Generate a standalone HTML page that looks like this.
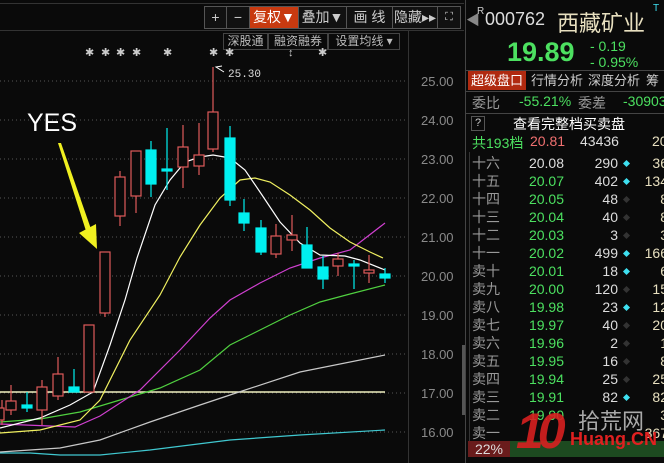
<!DOCTYPE html>
<html><head><meta charset="utf-8"><style>
*{margin:0;padding:0}
html,body{width:664px;height:463px;overflow:hidden}
body{background:#0a0a0a;position:relative;font-family:"Liberation Sans","Noto Sans CJK SC",sans-serif}
.a{position:absolute;white-space:nowrap}
.btn{position:absolute;top:6px;height:21px;border:1px solid #555;color:#ccc;font-size:14px;line-height:21px;text-align:center;background:#111}
.b2{position:absolute;top:33px;height:15px;border:1px solid #444;color:#bbb;font-size:12px;line-height:15px;text-align:center}
.row{position:absolute;left:466px;width:198px;height:18px;font-size:14px;line-height:18px}
.row .l{position:absolute;left:6px;color:#999}
.row .p{position:absolute;right:100px;color:#4ce060;font-family:"Liberation Sans",sans-serif}
.row .v{position:absolute;right:46px;color:#ddd;font-family:"Liberation Sans",sans-serif}
.row .d{position:absolute;left:158px;top:7px;width:5px;height:5px;transform:rotate(45deg);background:#333}
.row .d.c{background:#3ee0f0}
.row .r{position:absolute;right:-4px;color:#e8e0c0;font-family:"Liberation Sans",sans-serif}
</style></head><body>
<div class="a" style="left:0;top:3px;width:464px;height:1px;background:#333"></div>
<div class="a" style="left:0;top:30px;width:464px;height:1px;background:#333"></div>
<div class="btn" style="left:204px;width:21px">+</div>
<div class="btn" style="left:226px;width:22px">−</div>
<div class="btn" style="left:249px;width:48px;background:#c83a10;color:#fff">复权▼</div>
<div class="btn" style="left:298px;width:47px">叠加▼</div>
<div class="btn" style="left:346px;width:45px">画 线</div>
<div class="btn" style="left:392px;width:44px">隐藏▸▸</div>
<div class="btn" style="left:437px;width:22px;font-size:11px">⛶</div>
<div class="b2" style="left:223px;width:43px">深股通</div>
<div class="b2" style="left:268px;width:58px">融资融券</div>
<div class="b2" style="left:328px;width:70px">设置均线 ▾</div>

<svg class="a" style="left:0;top:0" width="466" height="463">
<g stroke="#555" stroke-dasharray="1,3">
<line x1="0" y1="81" x2="408" y2="81"/><line x1="0" y1="120" x2="408" y2="120"/><line x1="0" y1="159" x2="408" y2="159"/><line x1="0" y1="198" x2="408" y2="198"/><line x1="0" y1="237" x2="408" y2="237"/><line x1="0" y1="276" x2="408" y2="276"/><line x1="0" y1="315" x2="408" y2="315"/><line x1="0" y1="354" x2="408" y2="354"/><line x1="0" y1="393" x2="408" y2="393"/><line x1="0" y1="432" x2="408" y2="432"/>
</g>
<line x1="408.5" y1="31" x2="408.5" y2="463" stroke="#333"/>
<rect x="462" y="345" width="3" height="70" fill="#555"/>
<g fill="#8a8a8a" font-size="13" font-family="Liberation Sans">
<text x="421" y="86">25.00</text><text x="421" y="125">24.00</text><text x="421" y="164">23.00</text><text x="421" y="203">22.00</text><text x="421" y="242">21.00</text><text x="421" y="281">20.00</text><text x="421" y="320">19.00</text><text x="421" y="359">18.00</text><text x="421" y="398">17.00</text><text x="421" y="437">16.00</text>
</g>
<g fill="#ccc" font-size="11"><text x="85" y="56">✱</text><text x="101" y="56">✱</text><text x="116" y="56">✱</text><text x="132" y="56">✱</text><text x="163" y="56">✱</text><text x="209" y="56">✱</text><text x="225" y="56">✱</text><text x="288" y="56">↕</text><text x="318" y="56">✱</text></g>
<line x1="0" y1="392" x2="385" y2="392" stroke="#f0f0c0" stroke-width="1.5"/>
<g fill="none" stroke-width="1.2">
<polyline stroke="#40c8d0" points="0,453 30,453 60,455 100,455 150,450 230,440 300,435 385,430"/>
<polyline stroke="#c8c8c8" points="0,452 60,448 100,440 150,422 200,405 230,395 300,372 385,355"/>
<polyline stroke="#50d040" points="0,422 40,419 80,412 120,400 160,388 200,370 230,345 260,330 290,315 320,302 350,294 385,285"/>
<polyline stroke="#d040d0" points="0,424 75,427 100,416 140,390 180,350 210,318 230,300 260,283 290,268 320,258 350,250 385,223"/>
<polyline stroke="#f0f060" points="0,433 40,430 80,420 100,400 130,340 160,295 180,257 200,225 220,198 240,180 255,178 270,182 290,195 310,210 330,228 350,242 370,252 383,258"/>
<polyline stroke="#ffffff" points="0,428 40,418 70,405 93,392 110,345 125,300 137,258 155,205 170,180 185,162 200,157 213,155 230,158 245,170 262,195 280,222 300,243 320,255 345,256 360,260 385,270"/>
</g>
<g stroke="#e05a5a" fill="#0a0a0a" stroke-width="1.2">
<line x1="2" y1="400" x2="2" y2="425"/><rect x="-5" y="408" width="9" height="12"/>
<line x1="11" y1="385" x2="11" y2="415"/><rect x="6" y="401" width="10" height="9"/>
<line x1="42" y1="380" x2="42" y2="425"/><rect x="37" y="387" width="10" height="23"/>
<line x1="58" y1="357" x2="58" y2="400"/><rect x="53" y="374" width="10" height="22"/>
<rect x="84" y="325" width="10" height="67"/>
<line x1="105" y1="313" x2="105" y2="317"/><rect x="100" y="252" width="10" height="61"/>
<line x1="120" y1="171" x2="120" y2="226"/><rect x="115" y="177" width="10" height="39"/>
<line x1="136" y1="151" x2="136" y2="213"/><rect x="131" y="151" width="10" height="45"/>
<line x1="183" y1="125" x2="183" y2="188"/><rect x="178" y="147" width="10" height="20"/>
<line x1="199" y1="123" x2="199" y2="175"/><rect x="194" y="155" width="10" height="11"/>
<line x1="213" y1="67" x2="213" y2="152"/><rect x="208" y="112" width="10" height="37"/>
<line x1="276" y1="224" x2="276" y2="258"/><rect x="271" y="236" width="10" height="18"/>
<line x1="292" y1="215" x2="292" y2="251"/><rect x="287" y="235" width="10" height="5"/>
<line x1="338" y1="253" x2="338" y2="276"/><rect x="333" y="259" width="10" height="7"/>
<line x1="369" y1="255" x2="369" y2="283"/><rect x="364" y="270" width="10" height="3"/>
</g>
<g stroke="#00f0f0" fill="#00f0f0" stroke-width="1.2">
<line x1="27" y1="392" x2="27" y2="412"/><rect x="22" y="405" width="10" height="3"/>
<line x1="74" y1="369" x2="74" y2="392"/><rect x="69" y="387" width="10" height="5"/>
<line x1="151" y1="141" x2="151" y2="197"/><rect x="146" y="150" width="10" height="34"/>
<line x1="167" y1="128" x2="167" y2="190"/><rect x="162" y="169" width="10" height="2"/>
<line x1="230" y1="126" x2="230" y2="206"/><rect x="225" y="138" width="10" height="62"/>
<line x1="244" y1="199" x2="244" y2="231"/><rect x="239" y="213" width="10" height="10"/>
<line x1="261" y1="220" x2="261" y2="255"/><rect x="256" y="228" width="10" height="24"/>
<line x1="307" y1="227" x2="307" y2="268"/><rect x="302" y="245" width="10" height="23"/>
<line x1="323" y1="256" x2="323" y2="289"/><rect x="318" y="267" width="10" height="12"/>
<line x1="354" y1="260" x2="354" y2="289"/><rect x="349" y="264" width="10" height="2"/>
<line x1="385" y1="268" x2="385" y2="283"/><rect x="380" y="274" width="10" height="4"/>
</g>
<polyline points="224,72 216,67 222,66" fill="none" stroke="#fff"/>
<text x="228" y="77" fill="#ddd" font-size="11" font-family="Liberation Mono">25.30</text>
<text x="27" y="131" fill="#fff" font-size="25" font-family="Liberation Sans">YES</text>
<polygon points="58,143 61,143 91,229 86,231" fill="#f0f020"/>
<polygon points="79,233 96,224 97,249" fill="#f0f020"/>
</svg>

<div class="a" style="left:465px;top:0;width:1px;height:463px;background:#444"></div>
<div class="a" style="left:466px;top:10px;color:#888;font-size:14px">◀</div>
<div class="a" style="left:477px;top:6px;color:#ccc;font-size:10px">R</div>
<div class="a" style="left:485px;top:9px;color:#ddd;font-size:18px;font-family:'Liberation Sans'">000762</div>
<div class="a" style="left:557px;top:6px;color:#e8e0c0;font-size:22px">西藏矿业</div>
<div class="a" style="left:653px;top:3px;color:#3ee0f0;font-size:10px">T</div>
<div class="a" style="left:507px;top:37px;color:#4ce060;font-size:27px;font-weight:bold">19.89</div>
<div class="a" style="left:590px;top:38px;color:#4ce060;font-size:14px;line-height:16px">- 0.19<br>- 0.95%</div>
<div class="a" style="left:466px;top:70px;width:198px;height:20px;border-top:1px solid #444;border-bottom:1px solid #444"></div>
<div class="a" style="left:468px;top:71px;width:58px;height:19px;background:#b02a10;color:#fff;font-size:13px;line-height:19px;text-align:center">超级盘口</div>
<div class="a" style="left:531px;top:71px;color:#ccc;font-size:13px;line-height:19px">行情分析</div>
<div class="a" style="left:588px;top:71px;color:#ccc;font-size:13px;line-height:19px">深度分析</div>
<div class="a" style="left:646px;top:71px;color:#ccc;font-size:13px;line-height:19px">筹</div>
<div class="a" style="left:472px;top:93px;color:#999;font-size:14px">委比</div>
<div class="a" style="left:519px;top:93px;color:#4ce060;font-size:14px">-55.21%</div>
<div class="a" style="left:578px;top:93px;color:#999;font-size:14px">委差</div>
<div class="a" style="left:623px;top:93px;color:#4ce060;font-size:14px">-30903</div>
<div class="a" style="left:466px;top:113px;width:198px;height:1px;background:#444"></div>
<div class="a" style="left:471px;top:116px;width:12px;height:13px;border:1px solid #555;color:#ccc;font-size:11px;line-height:13px;text-align:center">?</div>
<div class="a" style="left:513px;top:114px;color:#fff;font-size:14px">查看完整档买卖盘</div>
<div class="a" style="left:472px;top:133px;color:#4ce060;font-size:14px">共193档</div>
<div class="a" style="left:530px;top:133px;color:#f07070;font-size:14px">20.81</div>
<div class="a" style="left:580px;top:133px;color:#ddd;font-size:14px">43436</div>
<div class="a" style="left:652px;top:133px;color:#e8e0c0;font-size:14px">20</div>
<div class="a" style="left:469px;top:152px;width:1px;height:290px;background:#333"></div>

<div class="row" style="top:154px"><span class="l">十六</span><span class="p" style="color:#ddd">20.08</span><span class="v">290</span><span class="d c"></span><span class="r">36</span></div>
<div class="row" style="top:172px"><span class="l">十五</span><span class="p">20.07</span><span class="v">402</span><span class="d c"></span><span class="r">134</span></div>
<div class="row" style="top:190px"><span class="l">十四</span><span class="p">20.05</span><span class="v">48</span><span class="d"></span><span class="r">8</span></div>
<div class="row" style="top:208px"><span class="l">十三</span><span class="p">20.04</span><span class="v">40</span><span class="d"></span><span class="r">8</span></div>
<div class="row" style="top:226px"><span class="l">十二</span><span class="p">20.03</span><span class="v">3</span><span class="d"></span><span class="r">3</span></div>
<div class="row" style="top:244px"><span class="l">十一</span><span class="p">20.02</span><span class="v">499</span><span class="d c"></span><span class="r">166</span></div>
<div class="row" style="top:262px"><span class="l">卖十</span><span class="p">20.01</span><span class="v">18</span><span class="d c"></span><span class="r">6</span></div>
<div class="row" style="top:280px"><span class="l">卖九</span><span class="p">20.00</span><span class="v">120</span><span class="d"></span><span class="r">15</span></div>
<div class="row" style="top:298px"><span class="l">卖八</span><span class="p">19.98</span><span class="v">23</span><span class="d c"></span><span class="r">12</span></div>
<div class="row" style="top:316px"><span class="l">卖七</span><span class="p">19.97</span><span class="v">40</span><span class="d"></span><span class="r">20</span></div>
<div class="row" style="top:334px"><span class="l">卖六</span><span class="p">19.96</span><span class="v">2</span><span class="d"></span><span class="r">1</span></div>
<div class="row" style="top:352px"><span class="l">卖五</span><span class="p">19.95</span><span class="v">16</span><span class="d"></span><span class="r">8</span></div>
<div class="row" style="top:370px"><span class="l">卖四</span><span class="p">19.94</span><span class="v">25</span><span class="d"></span><span class="r">25</span></div>
<div class="row" style="top:388px"><span class="l">卖三</span><span class="p">19.91</span><span class="v">82</span><span class="d c"></span><span class="r">82</span></div>
<div class="row" style="top:406px"><span class="l">卖二</span><span class="p">19.90</span><span class="v"></span><span class="r">3</span></div>
<div class="row" style="top:424px"><span class="l">卖一</span><span class="p"></span><span class="v"></span><span class="r">367</span></div>
<div class="a" style="left:468px;top:441px;width:42px;height:16px;background:#6a1c1c;color:#ddd;font-size:14px;line-height:16px;text-align:center">22%</div>
<div class="a" style="left:510px;top:441px;width:154px;height:16px;background:#1d4a20"></div>
<div class="a" style="left:516px;top:402px;color:#d82020;font-size:50px;font-weight:bold;font-style:italic;letter-spacing:-6px;opacity:.9">10</div>
<div class="a" style="left:578px;top:404px;color:#bbb;font-size:22px;opacity:.9">拾荒网</div>
<div class="a" style="left:570px;top:429px;color:#e02020;font-size:18px;font-weight:bold">Huang.CN</div>
</body></html>
